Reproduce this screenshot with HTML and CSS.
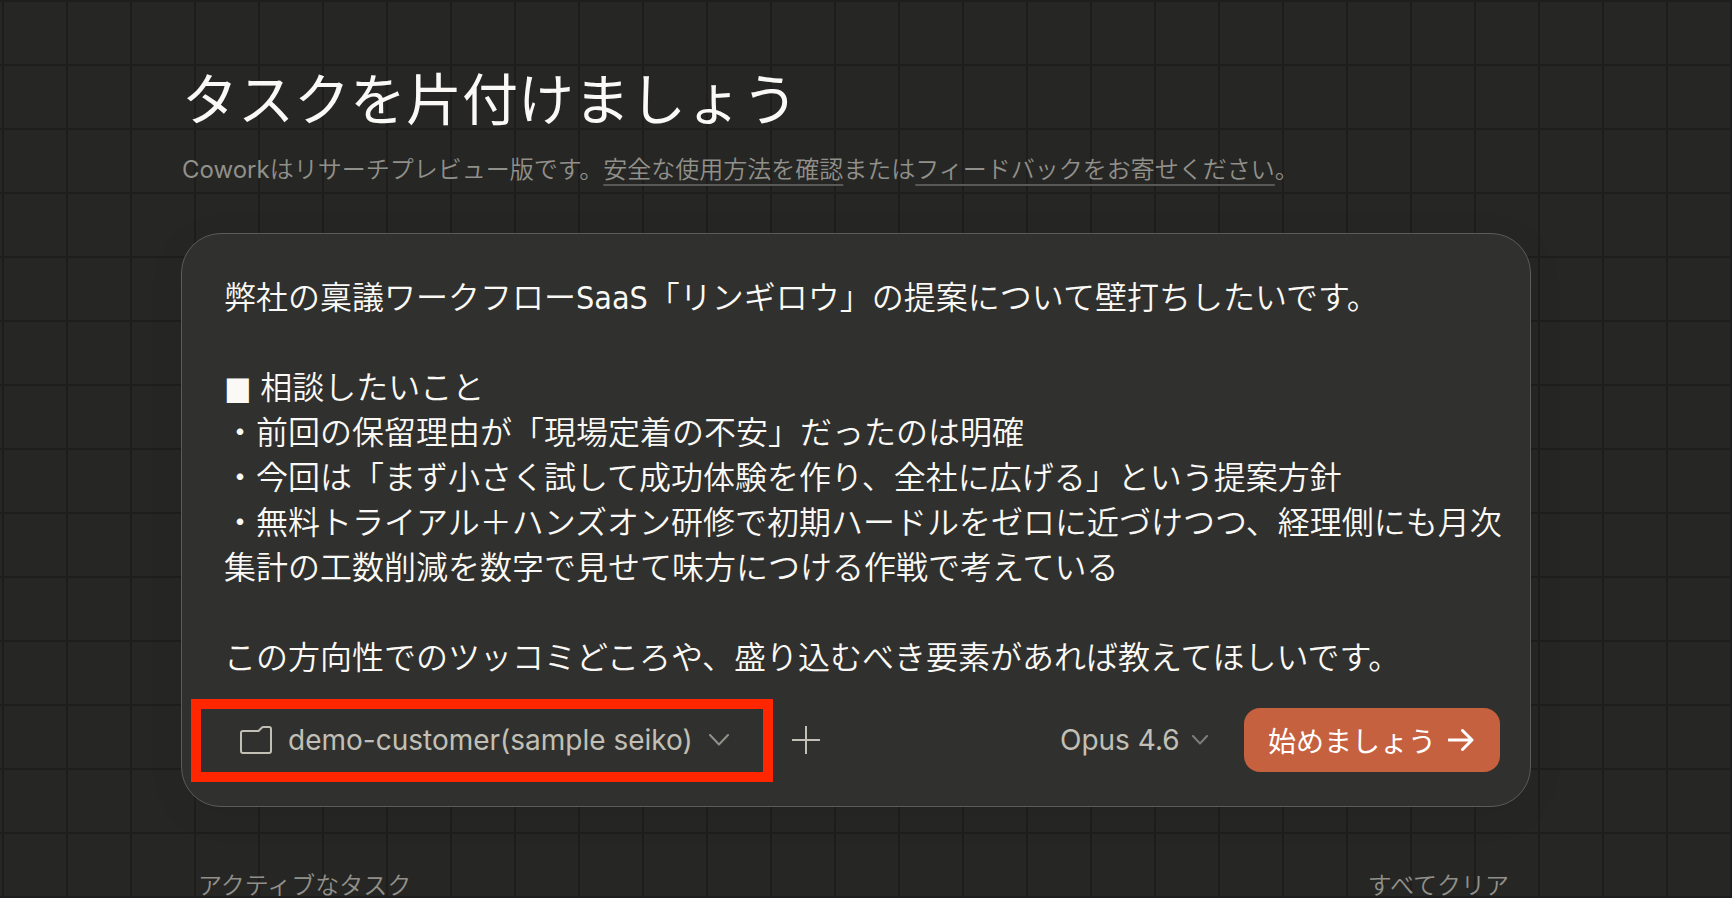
FILE: index.html
```html
<!DOCTYPE html>
<html lang="ja">
<head>
<meta charset="utf-8">
<meta name="viewport" content="width=device-width, initial-scale=1">
<title>Cowork</title>
<link rel="stylesheet" href="styles.css">
</head>
<body>
<main class="page">
  <header class="intro">
    <h1 class="intro-title">タスクを片付けましょう</h1>
    <p class="intro-note"><span class="product">Cowork</span>はリサーチプレビュー版です。<a class="intro-link" href="#safety">安全な使用方法を確認</a>または<a class="intro-link" href="#feedback">フィードバックをお寄せください</a>。</p>
  </header>

  <form class="composer">
    <textarea class="composer-text" rows="9" aria-label="タスクの内容" spellcheck="false">弊社の稟議ワークフローSaaS「リンギロウ」の提案について壁打ちしたいです。

■ 相談したいこと
・前回の保留理由が「現場定着の不安」だったのは明確
・今回は「まず小さく試して成功体験を作り、全社に広げる」という提案方針
・無料トライアル＋ハンズオン研修で初期ハードルをゼロに近づけつつ、経理側にも月次集計の工数削減を数字で見せて味方につける作戦で考えている

この方向性でのツッコミどころや、盛り込むべき要素があれば教えてほしいです。</textarea>
    <div class="toolbar">
      <label class="picker picker-folder">
        <svg class="icon-folder" viewBox="0 0 32 28" aria-hidden="true"><path d="M1 7a2 2 0 0 1 2-2h15.500l3.200-3.200A2.500 2.500 0 0 1 23.500 1H29a2 2 0 0 1 2 2v22a2 2 0 0 1-2 2H3a2 2 0 0 1-2-2z"/></svg>
        <select class="picker-select" aria-label="フォルダ"><option>demo-customer(sample seiko)</option></select>
        <svg class="icon-chevron" viewBox="0 0 20 12" aria-hidden="true"><path d="M1 1l9 9.500L19 1"/></svg>
      </label>
      <button class="add-button" type="button" aria-label="追加">
        <svg class="icon-plus" viewBox="0 0 28 28" aria-hidden="true"><path d="M14 0v28M0 14h28"/></svg>
      </button>
      <label class="picker picker-model">
        <select class="picker-select" aria-label="モデル"><option>Opus 4.6</option></select>
        <svg class="icon-chevron-small" viewBox="0 0 16 10" aria-hidden="true"><path d="M1 1l7 7.500L15 1"/></svg>
      </label>
      <button class="start-button" type="submit">始めましょう
        <svg class="icon-arrow" viewBox="0 0 26 22" aria-hidden="true"><path d="M1 11h23M14.500 1.500L24 11l-9.500 9.500"/></svg>
      </button>
    </div>
  </form>

  <section class="tasks">
    <h2 class="tasks-title">アクティブなタスク</h2>
    <button class="tasks-clear" type="button">すべてクリア</button>
  </section>
</main>
</body>
</html>
```
FILE: styles.css
```css
* {
  box-sizing: border-box;
}

body {
  margin: 0;
  min-height: 100vh;
  background-color: #262624;
  background-image:
    linear-gradient(#1f1e1c 2px, transparent 2px),
    linear-gradient(90deg, #1f1e1c 2px, transparent 2px);
  background-size: 64px 64px;
  background-position: 0 0, 2px 0;
  color: #faf9f5;
  font-family: Inter, "Noto Sans CJK JP", sans-serif;
  font-weight: 350;
}

button,
select,
textarea {
  margin: 0;
  padding: 0;
  border: 0;
  background: none;
  color: inherit;
  font: inherit;
}

svg {
  flex: none;
  fill: none;
  stroke: currentColor;
  stroke-width: 2;
  stroke-linecap: round;
  stroke-linejoin: round;
}

.page {
  padding: 60px 201px 0 181px;
}

.intro {
  padding-left: 1px;
}

.intro-title {
  margin: 0;
  font-size: 56px;
  font-weight: 400;
  line-height: 80px;
}

.intro-note {
  margin: 12px 0 45px;
  color: #91908a;
  font-size: 24px;
  line-height: 36px;
}

.product {
  font-weight: 400;
}

.intro-link {
  color: inherit;
  text-decoration: underline;
  text-decoration-color: #5a5955;
  text-decoration-thickness: 2px;
  text-underline-offset: 6px;
}

.composer {
  padding: 42px 20px 34px 42px;
  border: 1px solid #5b5b58;
  border-radius: 40px;
  background: #30302e;
  box-shadow: 0 8px 40px rgba(0, 0, 0, 0.06);
}

.composer-text {
  display: block;
  width: 100%;
  overflow: hidden;
  resize: none;
  outline: 0;
  font-family: "DejaVu Sans Condensed", "Noto Sans CJK JP", sans-serif;
  font-size: 32px;
  line-height: 45px;
}

.toolbar {
  display: flex;
  align-items: center;
  height: 64px;
  margin-top: 27px;
  padding: 0 10px 0 16px;
  color: #c2c0b6;
}

.picker {
  position: relative;
  display: flex;
  align-items: center;
  font-size: 28px;
  font-weight: 400;
}

.picker-select {
  appearance: none;
  outline: 0;
}

.picker-folder {
  gap: 16px;
}

.picker-folder::after {
  content: "";
  position: absolute;
  inset: -24px -44px -25px -49px;
  border: 10px solid #ff2600;
  pointer-events: none;
}

.picker-model {
  gap: 12px;
  margin-left: auto;
}

.icon-folder {
  width: 32px;
  height: 28px;
}

.icon-chevron {
  width: 20px;
  height: 12px;
  color: #91908a;
}

.icon-chevron-small {
  width: 16px;
  height: 10px;
  color: #7d7c77;
}

.add-button {
  display: flex;
  margin-left: 63px;
}

.icon-plus {
  width: 28px;
  height: 28px;
}

.start-button {
  display: flex;
  align-items: center;
  gap: 12px;
  height: 64px;
  margin-left: 36px;
  padding: 0 26px 0 24px;
  border-radius: 16px;
  background: #c6613f;
  color: #fff;
  font-size: 28px;
  font-weight: 400;
}

.icon-arrow {
  width: 26px;
  height: 22px;
  stroke-width: 3;
}

.tasks {
  display: flex;
  justify-content: space-between;
  margin-top: 67px;
  padding: 0 22px 0 17px;
  color: #91908a;
  font-size: 24px;
  line-height: 24px;
}

.tasks-title {
  margin: 0;
  font-size: 24px;
  font-weight: 350;
}
```
